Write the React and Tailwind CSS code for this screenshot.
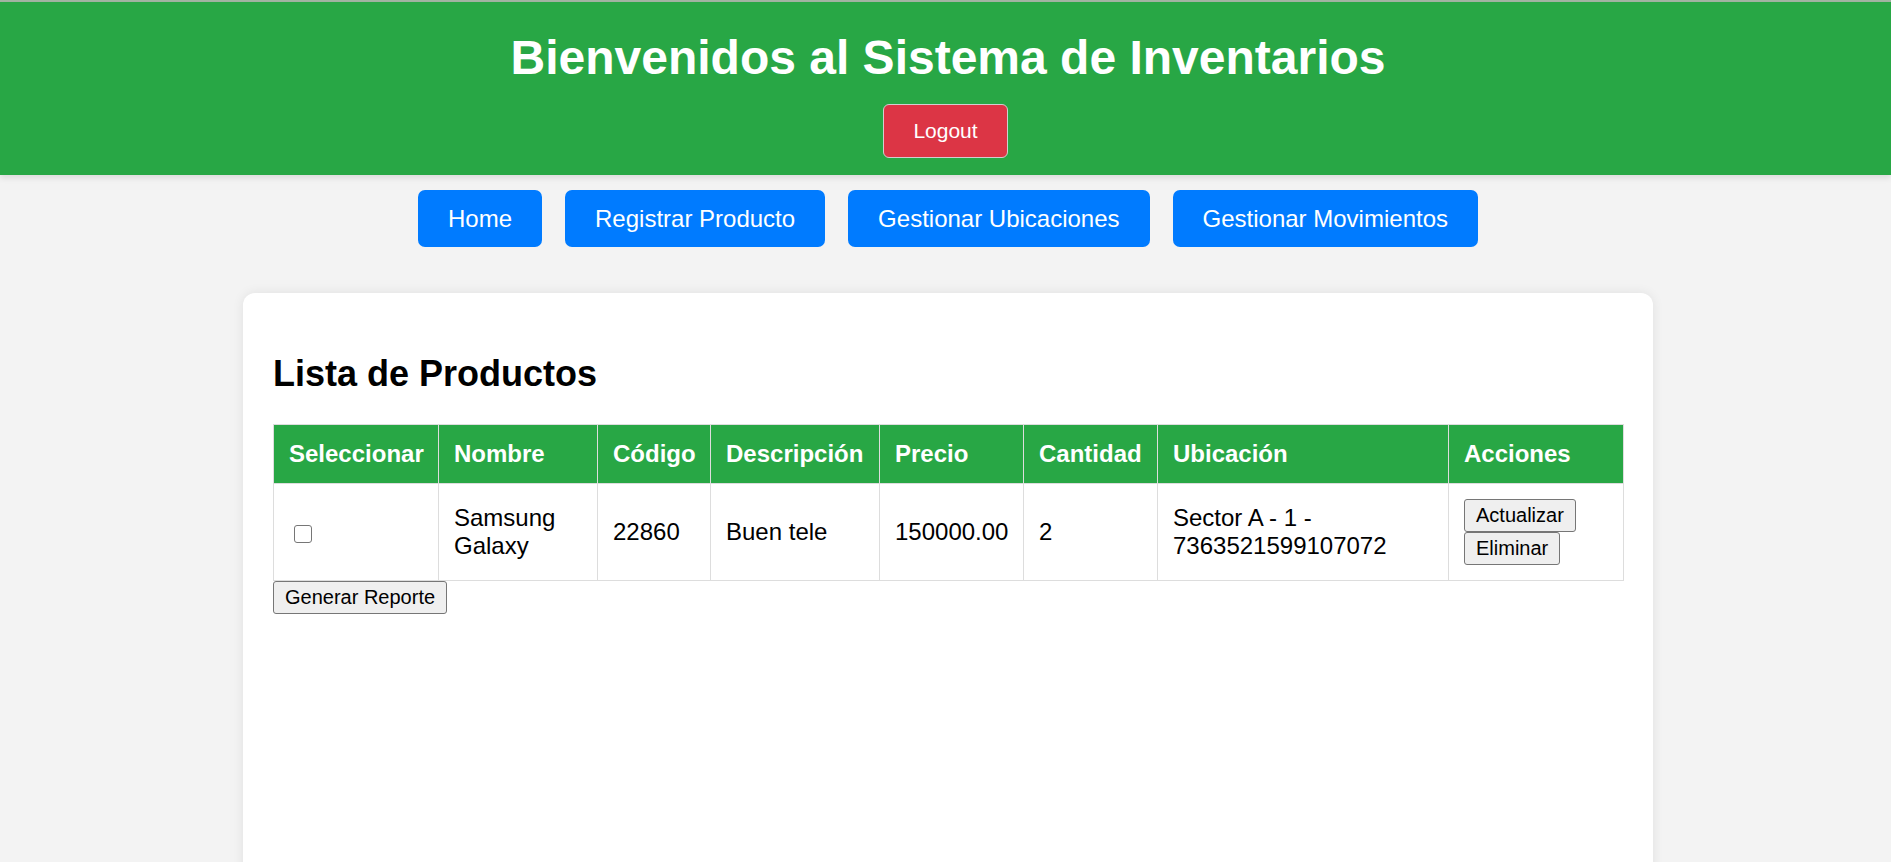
import React from 'react';

const navItems = ['Home', 'Registrar Producto', 'Gestionar Ubicaciones', 'Gestionar Movimientos'];

const columns = [
    { label: 'Seleccionar', w: 'w-[165px]' },
    { label: 'Nombre', w: 'w-[159px]' },
    { label: 'Código', w: 'w-[113px]' },
    { label: 'Descripción', w: 'w-[169px]' },
    { label: 'Precio', w: 'w-[144px]' },
    { label: 'Cantidad', w: 'w-[134px]' },
    { label: 'Ubicación', w: 'w-[291px]' },
    { label: 'Acciones', w: 'w-[175px]' },
];

const products = [
    {
        id: 1,
        nombre: 'Samsung Galaxy',
        codigo: '22860',
        descripcion: 'Buen tele',
        precio: '150000.00',
        cantidad: 2,
        ubicacion: 'Sector A - 1 - 7363521599107072',
    },
];

// plain grey browser-style button
const SysButton = ({ children }) => (
    <button className="bg-[#efefef] border border-[#767676] rounded-[3px] px-[11px] py-[3px] text-[20px] leading-[25px] text-black">
        {children}
    </button>
);

const App = () => {
    return (
        <div className="min-h-screen bg-[#f3f3f3] pl-[5px] font-['Liberation_Sans',Arial,sans-serif] text-black">
            <div className="-ml-[5px] h-[2px] bg-[#a3b5a3]" />

            <header className="relative -ml-[5px] bg-[#28a745] pt-[28px] pb-[17px] text-center text-white shadow-[0_3px_6px_rgba(0,0,0,0.1)]">
                <h1 className="pl-[5px] text-[48px] font-bold leading-[55px] mb-[19px]">
                    Bienvenidos al Sistema de Inventarios
                </h1>
                <button className="h-[54px] w-[125px] rounded-[6px] border-[1.5px] border-[#cfcfcf] bg-[#dc3545] text-[21px] leading-[24px] text-white">
                    Logout
                </button>
            </header>

            <nav className="flex justify-center gap-[23px] py-[15px]">
                {navItems.map((item) => (
                    <button
                        key={item}
                        className="h-[57px] px-[30px] rounded-[7px] bg-[#007bff] text-[24px] leading-[27px] text-white"
                    >
                        {item}
                    </button>
                ))}
            </nav>

            <main className="mx-auto mt-[31px] w-[1410px] min-h-[620px] rounded-[12px] bg-white p-[30px] shadow-[0_0_12px_rgba(0,0,0,0.08)]">
                <h2 className="my-[30px] text-[36px] font-bold leading-[41px]">Lista de Productos</h2>

                <table className="w-full table-fixed border-collapse text-[24px] leading-[27.5px]">
                    <thead>
                        <tr className="bg-[#28a745] text-white">
                            {columns.map((col) => (
                                <th
                                    key={col.label}
                                    className={`${col.w} border border-[#ddd] p-[15px] text-left font-bold`}
                                >
                                    {col.label}
                                </th>
                            ))}
                        </tr>
                    </thead>
                    <tbody>
                        {products.map((p) => (
                            <tr key={p.id}>
                                <td className="border border-[#ddd] p-[15px] align-middle">
                                    <input
                                        type="checkbox"
                                        className="ml-[5px] mt-[4px] block h-[18px] w-[18px] appearance-none rounded-[3px] border-[1.5px] border-[#767676] bg-white"
                                    />
                                </td>
                                <td className="border border-[#ddd] p-[15px]">{p.nombre}</td>
                                <td className="border border-[#ddd] p-[15px]">{p.codigo}</td>
                                <td className="border border-[#ddd] p-[15px]">{p.descripcion}</td>
                                <td className="border border-[#ddd] p-[15px]">{p.precio}</td>
                                <td className="border border-[#ddd] p-[15px]">{p.cantidad}</td>
                                <td className="border border-[#ddd] p-[15px] break-words">{p.ubicacion}</td>
                                <td className="border border-[#ddd] p-[15px]">
                                    <div className="flex flex-col items-start">
                                        <SysButton>Actualizar</SysButton>
                                        <SysButton>Eliminar</SysButton>
                                    </div>
                                </td>
                            </tr>
                        ))}
                    </tbody>
                </table>

                <SysButton>Generar Reporte</SysButton>
            </main>
        </div>
    );
};

export default App;
